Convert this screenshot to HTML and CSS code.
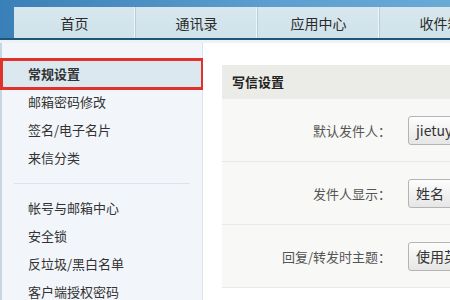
FILE: index.html
```html
<!DOCTYPE html>
<html lang="zh-CN">
<head>
<meta charset="utf-8">
<title>设置</title>
<link rel="stylesheet" href="styles.css">
</head>
<body>
<div class="page">
  <header class="topbar">
    <nav class="tabs">
      <div class="tab">首页</div>
      <div class="tab">通讯录</div>
      <div class="tab">应用中心</div>
      <div class="tab">收件箱</div>
    </nav>
  </header>
  <div class="strip"></div>
  <div class="body">
    <aside class="sidebar">
      <ul class="menu">
        <li class="item active">常规设置</li>
        <li class="item">邮箱密码修改</li>
        <li class="item">签名/电子名片</li>
        <li class="item">来信分类</li>
      </ul>
      <div class="sep"></div>
      <ul class="menu">
        <li class="item">帐号与邮箱中心</li>
        <li class="item">安全锁</li>
        <li class="item">反垃圾/黑白名单</li>
        <li class="item">客户端授权密码</li>
      </ul>
    </aside>
    <main class="main">
      <section class="panel">
        <div class="panel-head">写信设置</div>
        <div class="row">
          <div class="label">默认发件人：</div>
          <div class="btn">jietuyun@163.com</div>
        </div>
        <div class="row">
          <div class="label">发件人显示：</div>
          <div class="btn">姓名</div>
        </div>
        <div class="row">
          <div class="label">回复/转发时主题：</div>
          <div class="btn">使用英文</div>
        </div>
      </section>
    </main>
  </div>
</div>
</body>
</html>
```

FILE: styles.css
```css
* { box-sizing: border-box; }
html, body { margin: 0; padding: 0; }
body {
  width: 450px;
  height: 300px;
  overflow: hidden;
  background: #ffffff;
  font-family: "Noto Sans CJK SC", "Noto Sans", sans-serif;
  font-size: 13px;
  color: #333;
}
.page { width: 700px; }
.topbar {
  height: 40px;
  background: linear-gradient(to right, #3a80b8, #5d9fd0 40%, #7db9e0);
  padding: 7px 0 0 14px;
  border-bottom: 2px solid #1d5677;
}
.tabs { display: flex; height: 31px; }
.tab {
  width: 122px;
  height: 31px;
  background: linear-gradient(#d8e7ee, #cfe2ea);
  border-right: 1px solid #b8cdd8;
  box-shadow: inset -1px 0 0 #eef6fa;
  display: flex;
  align-items: center;
  justify-content: center;
  font-size: 14px;
  color: #2b2b2b;
}
.strip { height: 3px; background: #eef2f6; }
.body { display: flex; height: 300px; }
.sidebar {
  width: 203px;
  background: #f2f6fa;
  border-left: 2px solid #c9d6df;
  border-right: 1px solid #dde3e8;
  padding-top: 17px;
}
.menu { list-style: none; margin: 0; padding: 0; }
.item {
  height: 28px;
  line-height: 28px;
  padding-left: 26px;
  color: #333;
}
.item.active {
  font-weight: bold;
  background: #dbe8f0;
  outline: 3px solid #e0312b;
  outline-offset: -1px;
}
.sep {
  height: 1px;
  background: #dce3e9;
  margin: 11px 12px 10px 12px;
}
.main {
  flex: 1;
  background: #ffffff;
  padding: 22px 0 0 19px;
}
.panel { background: #f8f8f6; }
.panel-head {
  height: 34px;
  line-height: 34px;
  background: #ebebe8;
  padding-left: 10px;
  font-weight: bold;
  color: #222;
}
.row {
  display: flex;
  align-items: center;
  height: 63px;
  border-bottom: 1px solid #e8e8e5;
}
.label {
  width: 169px;
  text-align: right;
  color: #555;
  margin-right: 17px;
}
.btn {
  height: 29px;
  line-height: 27px;
  padding: 0 7px;
  min-width: 160px;
  border: 1px solid #b4b4b4;
  border-radius: 3px;
  background: linear-gradient(#fdfdfd, #e6e6e6);
  color: #333;
  font-size: 14px;
}
```
